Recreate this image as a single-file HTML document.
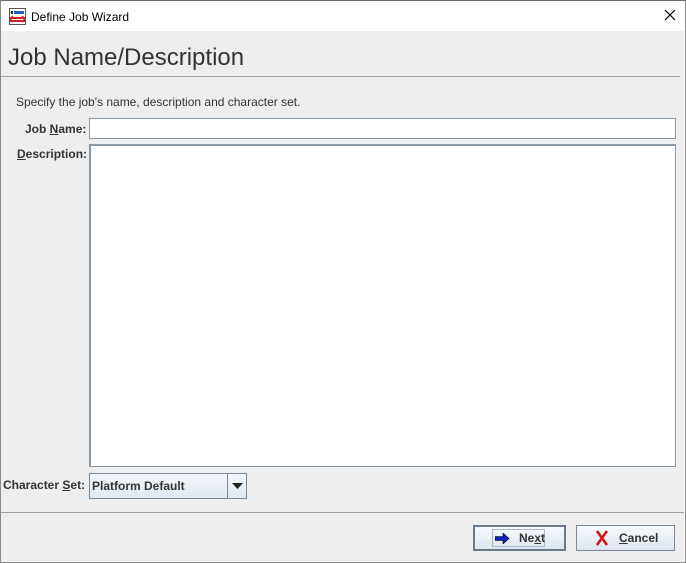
<!DOCTYPE html>
<html><head><style>
*{margin:0;padding:0;box-sizing:border-box}
body{width:686px;height:563px;background:#fff;font-family:"Liberation Sans",Arial,sans-serif;position:relative;overflow:hidden}
.win{position:absolute;left:0;top:0;width:686px;height:563px}
.frame{position:absolute;left:0;top:0;width:686px;height:563px;border:1px solid #8a8a8a;border-top-color:#6a6a6a}
.title{position:absolute;left:1px;top:1px;width:683px;height:30px;background:#fff}
.title span{position:absolute;left:30px;top:9px;font-size:12px;color:#000}
.body{position:absolute;left:1px;top:31px;width:683px;height:531px;background:#eeeeee}
.abs{position:absolute}
.lbl{font-size:12px;font-weight:bold;color:#333}
u{text-decoration:underline}
.btn{position:absolute;top:525px;height:26px;border:1px solid #7a8a99;background:linear-gradient(#f6f9fc,#dde6ef);font-size:12px;font-weight:bold;color:#333}
</style></head><body>
<div class="win">
<div class="title">
<svg class="abs" style="left:8px;top:7px" width="17" height="17" viewBox="0 0 17 17">
<rect x="0.5" y="0.5" width="16" height="16" fill="#fff" stroke="#555"/>
<rect x="5" y="3" width="10" height="3" fill="#2060c0"/>
<rect x="2" y="3" width="2" height="3" fill="#333"/>
<path d="M1 10h15M1 13h15" stroke="#d02020" stroke-width="2"/>
<path d="M4 8l-3 3 3 3M13 8l3 3-3 3" stroke="#d02020" fill="none" stroke-width="1.5"/>
</svg>
<span>Define Job Wizard</span>
<svg class="abs" style="left:663px;top:8px" width="12" height="12"><path d="M1 1L11 11M11 1L1 11" stroke="#000" stroke-width="1.2"/></svg>
</div>
<div class="body"></div>
<div class="abs" style="left:8px;top:44px;font-size:24px;color:#333">Job Name/Description</div>
<div class="abs" style="left:1px;top:76px;width:679px;height:1px;background:#a0a0a0"></div>
<div class="abs" style="left:16px;top:95px;font-size:12px;color:#333">Specify the job's name, description and character set.</div>
<div class="abs lbl" style="left:25px;top:122px">Job <u>N</u>ame:</div>
<div class="abs" style="left:89px;top:118px;width:587px;height:21px;background:#fff;border:1px solid #8a9aa8"></div>
<div class="abs lbl" style="left:17px;top:147px"><u>D</u>escription:</div>
<div class="abs" style="left:89px;top:144px;width:587px;height:323px;background:#fff;border:2px solid #8a9aa8;border-right-width:1px;border-bottom-width:1px"></div>
<div class="abs lbl" style="left:3px;top:478px">Character <u>S</u>et:</div>
<div class="abs" style="left:89px;top:473px;width:158px;height:26px;border:1px solid #7a8a99;background:linear-gradient(#f4f7fa,#e0e8f0)">
<span class="abs lbl" style="left:2px;top:5px">Platform Default</span>
<div class="abs" style="left:137px;top:0;width:19px;height:24px;border-left:1px solid #7a8a99"></div>
<svg class="abs" style="left:142px;top:9px" width="11" height="6"><path d="M0 0h11L5.5 6z" fill="#222"/></svg>
</div>
<div class="abs" style="left:1px;top:512px;width:683px;height:1px;background:#a0a0a0"></div>
<div class="btn" style="left:473px;width:93px;border:2px solid #6a7a89">
<div class="abs" style="left:17px;top:2px;width:53px;height:18px;border:1px solid #a8b8c8"></div>
<svg class="abs" style="left:20px;top:6px" width="15" height="11"><path d="M0 3.5h8V0l6 5.5-6 5.5V7.5H0z" fill="#1020c0" stroke="#000" stroke-width="0.6"/></svg>
<span class="abs" style="left:44px;top:4px">Ne<u>x</u>t</span>
</div>
<div class="btn" style="left:576px;width:99px">
<svg class="abs" style="left:18px;top:4px" width="14" height="16"><path d="M2 1L12 15M12 1L2 15" stroke="#d01818" stroke-width="2.6"/></svg>
<span class="abs" style="left:42px;top:5px"><u>C</u>ancel</span>
</div>
</div>
<div class="frame"></div>
</body></html>
